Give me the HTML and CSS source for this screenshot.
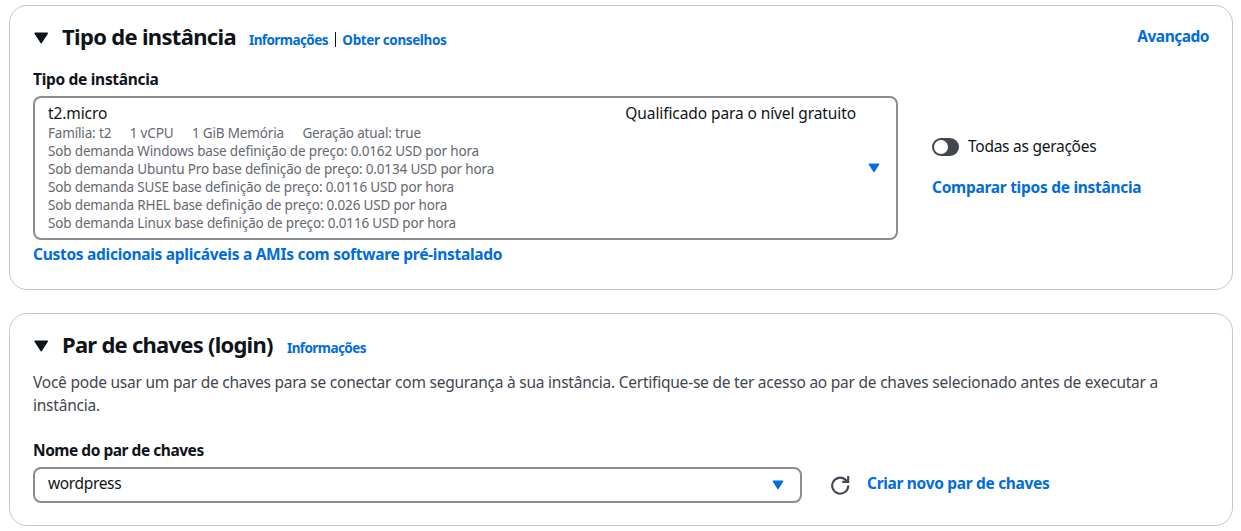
FILE: index.html
```html
<!DOCTYPE html>
<html lang="pt-BR">
<head>
<meta charset="utf-8">
<title>Executar uma instância</title>
<link rel="stylesheet" href="styles.css">
</head>
<body>
<main class="page">
  <section class="card card-type">
    <header class="card-header">
      <svg class="caret caret-title" viewBox="0 0 16 12"><path d="M2.2 1.4h12L8.2 10.6z" fill="currentColor" stroke="currentColor" stroke-width="1.6" stroke-linejoin="round"/></svg>
      <h2 class="title title-type">Tipo de instância</h2>
      <a class="info">Informações</a>
      <span class="divider"></span>
      <a class="info info-advice">Obter conselhos</a>
      <a class="link advanced">Avançado</a>
    </header>
    <div class="type-row">
      <div class="type-field">
        <label class="label label-type">Tipo de instância</label>
        <div class="select select-type">
          <div class="option">
            <div class="option-head"><span class="t2">t2.micro</span><span class="tier">Qualificado para o nível gratuito</span></div>
            <div class="tags"><span>Família: t2</span><span>1 vCPU</span><span>1 GiB Memória</span><span>Geração atual: true</span></div>
            <div class="price">Sob demanda Windows base definição de preço: 0.0162 USD por hora</div>
            <div class="price">Sob demanda Ubuntu Pro base definição de preço: 0.0134 USD por hora</div>
            <div class="price">Sob demanda SUSE base definição de preço: 0.0116 USD por hora</div>
            <div class="price">Sob demanda RHEL base definição de preço: 0.026 USD por hora</div>
            <div class="price">Sob demanda Linux base definição de preço: 0.0116 USD por hora</div>
          </div>
          <svg class="caret caret-select" viewBox="0 0 12 10"><path d="M1.2 1.2h9.6L6 8.6z" fill="currentColor" stroke="currentColor" stroke-width="1.2" stroke-linejoin="round"/></svg>
        </div>
        <a class="link costs">Custos adicionais aplicáveis a AMIs com software pré-instalado</a>
      </div>
      <div class="type-side">
        <div class="toggle-row"><span class="toggle"><span class="knob"></span></span><span class="toggle-label">Todas as gerações</span></div>
        <a class="link compare">Comparar tipos de instância</a>
      </div>
    </div>
  </section>

  <section class="card card-key">
    <header class="card-header">
      <svg class="caret caret-title" viewBox="0 0 16 12"><path d="M2.2 1.4h12L8.2 10.6z" fill="currentColor" stroke="currentColor" stroke-width="1.6" stroke-linejoin="round"/></svg>
      <h2 class="title title-key">Par de chaves (login)</h2>
      <a class="info">Informações</a>
    </header>
    <p class="description">Você pode usar um par de chaves para se conectar com segurança à sua instância. Certifique-se de ter acesso ao par de chaves selecionado antes de executar a<br>instância.</p>
    <label class="label label-key">Nome do par de chaves</label>
    <div class="key-row">
      <div class="select select-key">
        <span class="wordpress">wordpress</span>
        <svg class="caret caret-select" viewBox="0 0 12 10"><path d="M1.2 1.2h9.6L6 8.6z" fill="currentColor" stroke="currentColor" stroke-width="1.2" stroke-linejoin="round"/></svg>
      </div>
      <svg class="refresh" viewBox="0 0 20 20" fill="none" stroke="currentColor" stroke-width="2.1"><path d="M18.2 10.4A8 8 0 1 1 15.4 4.6L17 6.2M18.2 1v5.9h-5.9"/></svg>
      <a class="link create">Criar novo par de chaves</a>
    </div>
  </section>
</main>
</body>
</html>
```

FILE: styles.css
```css
* { box-sizing: border-box; }
body {
  margin: 0;
  background: #fff;
  color: #0f141a;
  font: 15.5px/22px "Noto Sans", "Open Sans", sans-serif;
  white-space: nowrap;
}
.page { display: flex; flex-direction: column; gap: 23px; padding: 5px 8px 0 9px; }
.card { border: 1px solid #c6c6cd; border-radius: 18px; padding: 0 23px; }
.card-type { height: 285px; }
.card-key { height: 213px; }
.card-header { display: flex; align-items: baseline; height: 62px; padding-top: 15px; }
.caret { display: block; flex: none; }
.caret-title { width: 16px; height: 12px; margin-right: 13px; align-self: flex-start; margin-top: 10.5px; }
.title { margin: 0; font-size: 22px; line-height: 30px; font-weight: 700; letter-spacing: -0.68px; width: 187px; }
.title-key { width: 225px; letter-spacing: -0.75px; }
.info { color: #006ce0; font-size: 13.5px; font-weight: 700; letter-spacing: -0.58px; }
.info-advice { letter-spacing: -0.38px; }
.divider { width: 1.5px; height: 15px; background: #0f141a; margin: 11px 6px 0 7px; align-self: flex-start; }
.link { color: #006ce0; font-weight: 700; letter-spacing: -0.28px; }
.advanced { margin-left: auto; align-self: flex-start; margin-top: 4px; letter-spacing: -0.5px; }
.type-row { display: flex; gap: 34px; }
.type-field { width: 865px; }
.label { display: block; font-weight: 700; line-height: 22px; letter-spacing: -0.3px; }
.select { display: flex; align-items: center; justify-content: space-between; border: 2px solid #8c8c94; border-radius: 8px; padding: 0 16px 0 13px; }
.select-type { height: 144px; margin-top: 6px; }
.caret-select { color: #006ce0; width: 12px; height: 10px; }
.option { width: 808px; }
.option-head { display: flex; justify-content: space-between; height: 20px; line-height: 18px; letter-spacing: -0.1px; }
.tags, .price { color: #656871; font-size: 13.5px; line-height: 18px; letter-spacing: -0.16px; }
.tags { display: flex; gap: 18.5px; }
.costs { display: block; margin-top: 3px; }
.type-side { padding-top: 68px; }
.toggle-row { display: flex; align-items: center; gap: 9px; height: 22px; }
.toggle-label { letter-spacing: -0.26px; margin-top: -2px; }
.toggle { width: 27px; height: 18px; border-radius: 9px; background: #424650; padding: 2px; }
.knob { display: block; width: 14px; height: 14px; border-radius: 50%; background: #fff; }
.compare { display: block; margin-top: 18px; }
.description { margin: -5px 0 0; color: #424650; line-height: 23px; letter-spacing: -0.23px; }
.label-key { margin-top: 22px; letter-spacing: -0.47px; }
.key-row { display: flex; align-items: center; margin-top: 6px; }
.select-key { width: 769px; height: 36px; }
.wordpress { letter-spacing: -0.35px; margin-top: -4px; }
.refresh { width: 20px; height: 20px; color: #424650; margin: -1px 17px 0 28px; }
.create { margin-top: -4px; letter-spacing: -0.32px; }
```
